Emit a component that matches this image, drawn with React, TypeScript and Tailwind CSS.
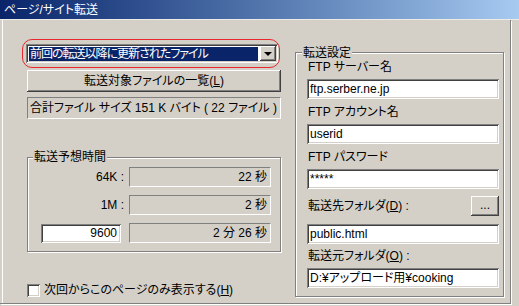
import React from 'react';

const edit =
  'bg-white shadow-[inset_1px_1px_0_#808080,inset_-1px_-1px_0_#ffffff,inset_2px_2px_0_#404040,inset_-2px_-2px_0_#d4d0c8]';
const raised =
  'bg-[#d4d0c8] shadow-[inset_-1px_-1px_0_#404040,inset_1px_1px_0_#ffffff,inset_-2px_-2px_0_#808080]';
const thinSunken = 'border border-t-[#808080] border-l-[#808080] border-b-white border-r-white';
const etched = 'border border-[#808080] shadow-[1px_1px_0_#ffffff,inset_1px_1px_0_#ffffff]';

function TimeRow({ label, value, input }: { label?: string; value: string; input?: string }) {
  return (
    <div className="flex items-center h-[20px]">
      <div className="w-[84px] flex justify-end">
        {input ? (
          <div className={`${edit} w-[80px] h-[19px] mr-[4px] flex items-center justify-end pr-[4px]`}>{input}</div>
        ) : (
          <span className="pr-[1px]">{label}</span>
        )}
      </div>
      <div className={`${thinSunken} ml-[4px] w-[142px] h-[20px] flex items-center justify-end pr-[3px]`}>{value}</div>
    </div>
  );
}

function Field({ value }: { value: string }) {
  return <div className={`${edit} w-[192px] h-[20px] flex items-center pl-[3px]`}>{value}</div>;
}

function FieldLabel({ children, h = 'h-[25px]' }: { children: React.ReactNode; h?: string }) {
  return <div className={`${h} flex items-center pl-[1px]`}>{children}</div>;
}

export default function App() {
  return (
    <div className="w-[519px] h-[306px] overflow-hidden bg-[#d4d0c8] text-[12px] leading-[14px] text-black font-['Liberation_Sans','Noto_Sans_CJK_JP',sans-serif] [font-feature-settings:'palt'] flex flex-col">
      {/* title bar */}
      <div className="h-[19px] shrink-0 bg-gradient-to-r from-[#0a246a] to-[#a6caf0] flex items-center pl-[4px] text-white">
        ページ/サイト転送
      </div>
      <div className="h-px shrink-0 bg-[#ecebe6]" />

      <div className="w-[511px] h-[284px] flex border-r border-b border-[#808080] shadow-[1px_1px_0_#ffffff]">
        <div className="w-[2px]" />
        <div className="w-px bg-white" />

        {/* left column */}
        <div className="ml-[23px] w-[255px] flex flex-col">
          <div className="relative mt-[24px] w-[252px] h-[19px]">
            <div className={`${edit} w-full h-full flex p-[2px]`}>
              <div className="flex-1 flex items-center pl-px pr-[2px]">
                <div className="w-full h-[14px] bg-[#0a246a] text-white flex items-center pl-px tracking-[-1px]">
                  前回の転送以降に更新されたファイル
                </div>
              </div>
              <div className={`${raised} w-[16px] h-full flex items-center justify-center`}>
                <div className="w-0 h-0 border-l-[4px] border-r-[4px] border-t-[4px] border-l-transparent border-r-transparent border-t-black" />
              </div>
            </div>
            <div className="absolute -left-[4px] -top-[5px] w-[258px] h-[29px] rounded-[10px] border border-[#e8282c]" />
          </div>

          <div className={`${raised} mt-[7px] ml-px w-[254px] h-[22px] flex items-center justify-center`}>
            転送対象ファイルの一覧(<span className="underline">L</span>)
          </div>

          <div className={`${thinSunken} mt-[5px] ml-px w-[254px] h-[22px] flex items-center pl-[2px]`}>
            合計ファイル サイズ 151 K バイト ( 22 ファイル )
          </div>

          <div className={`${etched} relative mt-[38px] ml-px w-[254px] h-[95px] flex flex-col gap-[8px] pt-[9px] pl-[13px]`}>
            <span className="absolute left-[5px] -top-[8px] px-[1px] bg-[#d4d0c8]">転送予想時間</span>
            <TimeRow label="64K :" value="22 秒" />
            <TimeRow label="1M :" value="2 秒" />
            <TimeRow input="9600" value="2 分 26 秒" />
          </div>

          <div className="mt-[31px] ml-px flex items-center gap-[4px]">
            <div className={`${edit} w-[13px] h-[13px]`} />
            <span>
              次回からこのページのみ表示する(<span className="underline">H</span>)
            </span>
          </div>
        </div>

        {/* right group */}
        <div className={`${etched} relative ml-[14px] mt-[32px] w-[209px] h-[245px] flex flex-col pl-[11px] pt-px`}>
          <span className="absolute left-[6px] -top-[7px] px-[1px] bg-[#d4d0c8]">転送設定</span>
          <FieldLabel>FTP サーバー名</FieldLabel>
          <Field value="ftp.serber.ne.jp" />
          <FieldLabel>FTP アカウント名</FieldLabel>
          <Field value="userid" />
          <FieldLabel>FTP パスワード</FieldLabel>
          <Field value="*****" />
          <div className="w-[192px] flex items-center justify-between pt-[7px] pb-[8px]">
            <span className="pl-[1px]">
              転送先フォルダ(<span className="underline">D</span>) :
            </span>
            <div className={`${raised} w-[28px] h-[20px] flex items-center justify-center pb-[3px]`}>...</div>
          </div>
          <Field value="public.html" />
          <FieldLabel h="h-[24px]">
            転送元フォルダ(<span className="underline">O</span>) :
          </FieldLabel>
          <Field value="D:¥アップロード用¥cooking" />
        </div>
      </div>
    </div>
  );
}
